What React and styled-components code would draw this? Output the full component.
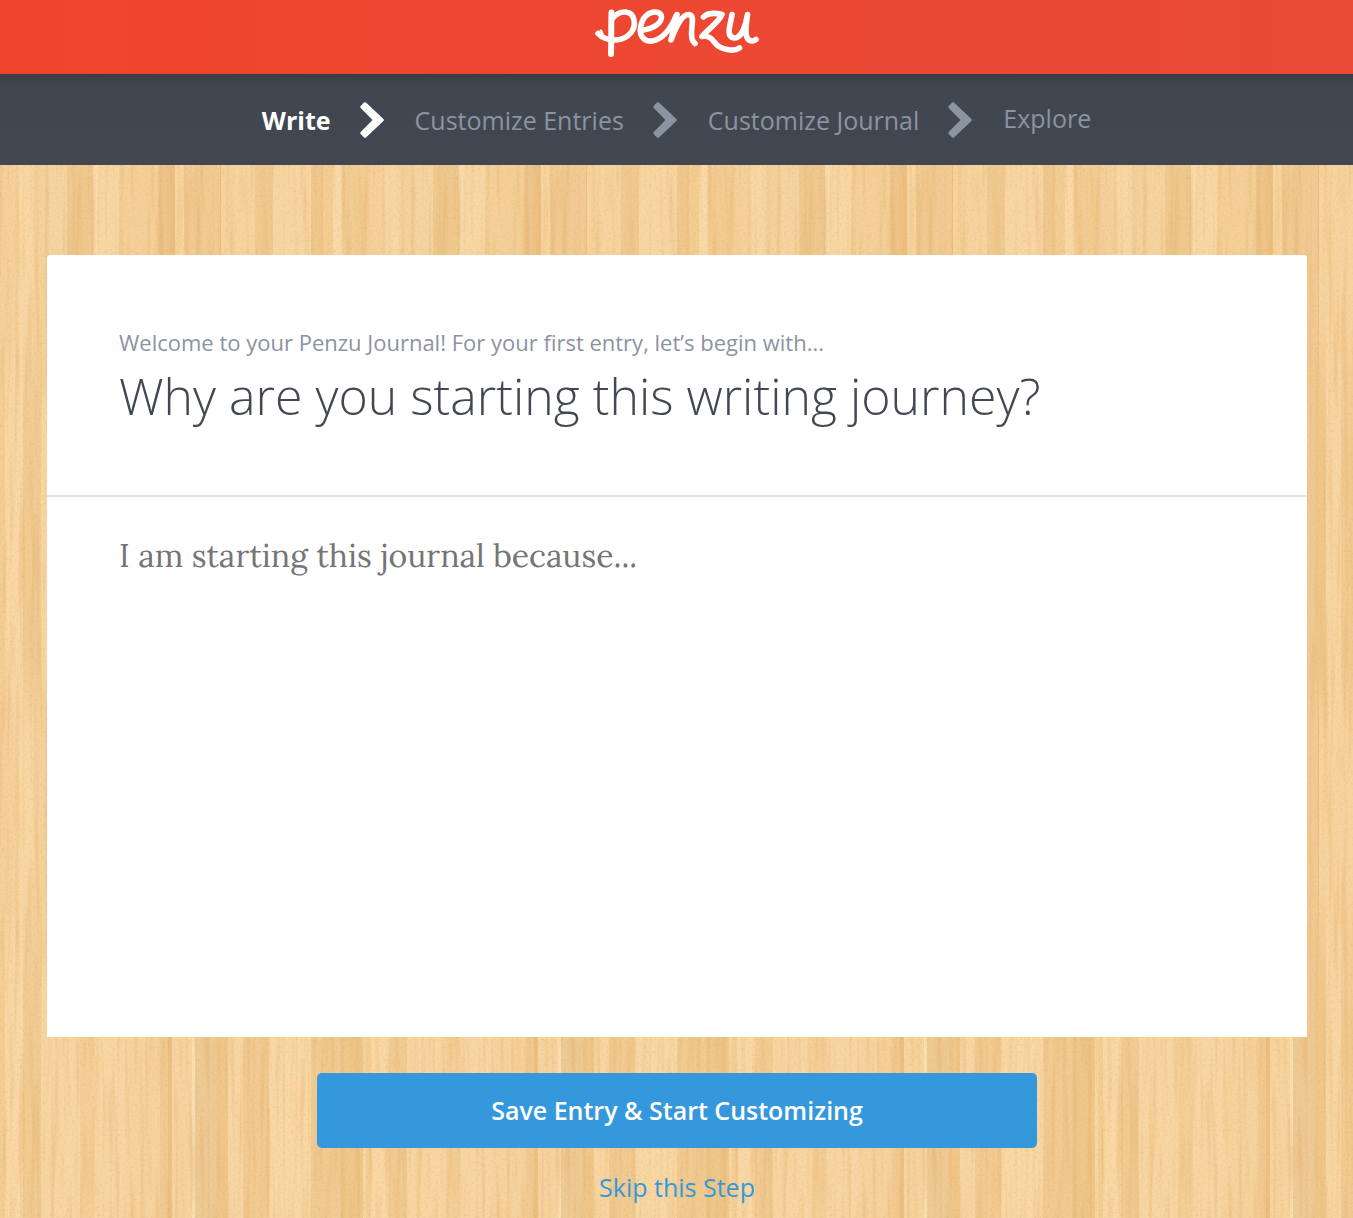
import React from 'react';
import styled, { createGlobalStyle } from 'styled-components';

const TILE_WIDTH = 366;
const TILE_HEIGHT = 571;

/* Each plank is [left, width, colour]. */
const UPPER_PLANKS = [
  [0, 14, '#f5d09a'], [14, 19, '#f8d7a3'], [33, 15, '#f4d29b'], [48, 19, '#f6d49f'],
  [67, 26, '#efc98f'], [93, 4, '#fadcae'], [97, 22, '#f8d7a3'], [119, 39, '#f4d098'],
  [158, 9, '#eec58b'], [167, 8, '#edc284'], [175, 9, '#f8d6a0'], [184, 36, '#f1cb93'],
  [220, 1, '#e8c086'], [221, 34, '#f7d49e'], [255, 18, '#efcb91'], [273, 38, '#f8d6a2'],
  [311, 12, '#efc98f'], [323, 10, '#f3cd92'], [333, 9, '#f9d9a7'], [342, 24, '#f2cd93'],
];
const LOWER_PLANKS = [
  [0, 5, '#f3cd94'], [5, 18, '#f9d8a5'], [23, 18, '#f0cb92'], [41, 39, '#f8d6a2'],
  [80, 15, '#f3cf97'], [95, 33, '#f8d6a3'], [128, 32, '#f6d39d'], [160, 8, '#f0ca91'],
  [168, 4, '#ebc284'], [172, 20, '#f7d49f'], [192, 3, '#fbe0b2'], [195, 21, '#eecb95'],
  [216, 12, '#efc78b'], [228, 15, '#f8d6a2'], [243, 26, '#f1cb92'], [269, 42, '#f9d8a4'],
  [311, 29, '#f0cb92'], [340, 23, '#eec789'], [363, 3, '#f8d7a2'],
];

const planks = (list) =>
  list.map(([x, w, fill]) => `<rect x="${x}" width="${w}" height="${TILE_HEIGHT}" fill="${fill}"/>`).join('');

const wood = `url("data:image/svg+xml,${encodeURIComponent(
  `<svg xmlns="http://www.w3.org/2000/svg" width="${TILE_WIDTH}" height="${TILE_HEIGHT}">
    <linearGradient id="fade" x1="0" y1="0" x2="0" y2="1">
      <stop offset=".22" stop-color="#000"/><stop offset=".48" stop-color="#fff"/>
      <stop offset=".86" stop-color="#fff"/><stop offset="1" stop-color="#000"/>
    </linearGradient>
    <mask id="blend"><rect width="100%" height="100%" fill="url(#fade)"/></mask>
    <filter id="grain" x="0" y="0" width="100%" height="100%" color-interpolation-filters="sRGB">
      <feTurbulence type="fractalNoise" baseFrequency="0.2 0.008" numOctaves="2" seed="4" stitchTiles="stitch"/>
      <feColorMatrix values="0 0 0 0 0.87  0 0 0 0 0.66  0 0 0 0 0.38  0.9 0 0 0 -0.41"/>
    </filter>
    <filter id="speckle" x="0" y="0" width="100%" height="100%" color-interpolation-filters="sRGB">
      <feTurbulence type="fractalNoise" baseFrequency="0.4" numOctaves="2" seed="9" stitchTiles="stitch"/>
      <feColorMatrix values="0 0 0 0 0.8  0 0 0 0 0.6  0 0 0 0 0.38  0.5 0 0 0 -0.24"/>
    </filter>
    ${planks(UPPER_PLANKS)}
    <g mask="url(#blend)">${planks(LOWER_PLANKS)}</g>
    <rect width="100%" height="100%" filter="url(#grain)"/>
    <rect width="100%" height="100%" filter="url(#speckle)"/>
  </svg>`
)}")`;

const GlobalStyle = createGlobalStyle`
  *, *::before, *::after { box-sizing: border-box; }
  body { margin: 0; background: #f5d19a; font-family: "Open Sans", sans-serif; }
`;

const Page = styled.div`
  min-height: 100vh;
  display: flex;
  flex-direction: column;
`;

const Header = styled.header`
  height: 74px;
  display: flex;
  justify-content: center;
  align-items: flex-start;
  padding-top: 8px;
  background: linear-gradient(90deg, #f0442d, #e94b37);
`;

const LogoLink = styled.a`
  display: block;
  line-height: 0;
`;

const Steps = styled.nav`
  background: linear-gradient(#393d42, #404751 14px, #424751);
`;

const StepList = styled.ol`
  min-height: 91px;
  margin: 0;
  padding: 0;
  list-style: none;
  display: flex;
  justify-content: center;
  align-items: center;
`;

const Step = styled.li`
  display: flex;
  align-items: center;
  padding-bottom: ${({ $last }) => ($last ? '4px' : 0)};
  font-size: 25px;
  line-height: 36px;
  font-weight: ${({ $active }) => ($active ? 700 : 400)};
  color: ${({ $active }) => ($active ? '#fff' : '#8c93a1')};
`;

const Chevron = styled.svg`
  width: 24px;
  height: 36px;
  margin: 1px 31px 0 29px;
  fill: currentColor;
`;

const Desk = styled.main`
  flex: 1;
  display: flex;
  flex-direction: column;
  align-items: center;
  padding: 90px 46px 12px 47px;
  background: ${wood} 0 0 repeat;
`;

const Card = styled.section`
  width: 100%;
  display: flex;
  flex-direction: column;
  background: #fff;
  border-radius: 3px 3px 0 0;
`;

const Prompt = styled.div`
  padding: 71px 72px 61px;
  border-bottom: 2px solid #e3e4e6;
`;

const Intro = styled.p`
  margin: 0;
  font-size: 22px;
  line-height: 32px;
  color: #8c93a1;
`;

const Question = styled.h1`
  margin: 0;
  font-size: 50px;
  line-height: 76px;
  font-weight: 300;
  color: #424751;
`;

const Entry = styled.textarea`
  display: block;
  width: 100%;
  height: 540px;
  padding: 36px 72px;
  border: 0;
  outline: 0;
  resize: none;
  background: transparent;
  font-family: Lora, "Liberation Serif", serif;
  font-size: 32px;
  line-height: 46px;
  color: #424751;

  &::placeholder { color: #757575; opacity: 1; }
`;

const SaveButton = styled.button`
  width: 720px;
  max-width: 100%;
  height: 75px;
  margin-top: 36px;
  padding: 0 24px 2px;
  border: 0;
  border-radius: 5px;
  background: #3698dc;
  font-family: inherit;
  font-size: 25px;
  font-weight: 600;
  color: #fff;
  cursor: pointer;
`;

const SkipLink = styled.a`
  margin-top: 21px;
  font-size: 25px;
  line-height: 36px;
  color: #3698dc;
  text-decoration: none;
`;

const steps = ['Write', 'Customize Entries', 'Customize Journal', 'Explore'];

const Logo = () => (
  <svg width="166" height="52" viewBox="0 0 166 52" fill="none" stroke="#fff" strokeWidth="5.6" strokeLinecap="round" strokeLinejoin="round" aria-hidden="true">
    <path d="M17.500 4.500C17 18 17.500 32 17 46" strokeWidth="6" />
    <path d="M4 25.500C8 30 14 32 22 32C35 31 42 21 40 12C38 2 26 1 18 11" />
    <path d="M7 23L9 28" strokeWidth="3" />
    <path d="M49 22C59 21 68 15 67.500 8.500C66 1 52 3 48 14C43 27 50 34 58 33C70 31 77 20 82 8" />
    <path d="M83 6.500L77 32C82 19 88 6 95 6.500C103 8 94 25 99 33L101 35.500" />
    <path d="M109.500 9C114 4.500 122 5 128 6.500C124 15 115 20 108 28.500C119 27 119 35 125 38.500C132 43 141 43 145.500 40" />
    <path d="M138 6.500C137 15 131 29 140 30C148 30 152 16 153.500 6.500C152 18 150 29 155 32C158 34 160 33 162 31.500" />
  </svg>
);

export default function App() {
  return (
    <Page>
      <GlobalStyle />
      <Header>
        <LogoLink href="#" aria-label="Penzu"><Logo /></LogoLink>
      </Header>
      <Steps aria-label="Setup steps">
        <StepList>
          {steps.map((label, i) => (
            <Step key={label} $active={i === 0} $last={i === steps.length - 1} aria-current={i === 0 ? 'step' : undefined}>
              {label}
              {i < steps.length - 1 && (
                <Chevron viewBox="0 0 24 36" aria-hidden="true">
                  <path d="M6 .6L23.400 17a1.500 1.500 0 0 1 0 2L6 35.400a1.500 1.500 0 0 1-2 0L.7 32a1.500 1.500 0 0 1 0-2L12.500 18L.7 6a1.500 1.500 0 0 1 0-2L4 .6a1.500 1.500 0 0 1 2 0Z" />
                </Chevron>
              )}
            </Step>
          ))}
        </StepList>
      </Steps>
      <Desk>
        <Card>
          <Prompt>
            <Intro>Welcome to your Penzu Journal! For your first entry, let’s begin with...</Intro>
            <Question id="question">Why are you starting this writing journey?</Question>
          </Prompt>
          <Entry aria-labelledby="question" placeholder="I am starting this journal because..." />
        </Card>
        <SaveButton type="button">Save Entry &amp; Start Customizing</SaveButton>
        <SkipLink href="#">Skip this Step</SkipLink>
      </Desk>
    </Page>
  );
}
